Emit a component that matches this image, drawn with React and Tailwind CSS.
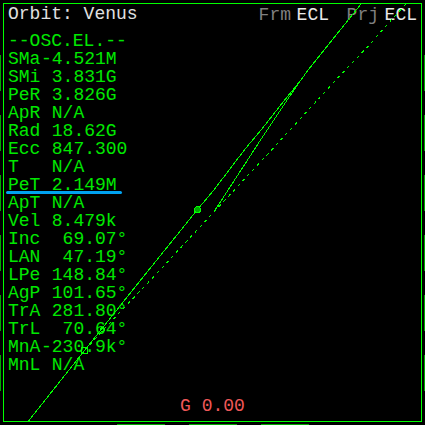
import React from "react";

const elements = [
  ["SMa", "-4.521M"],
  ["SMi", " 3.831G"],
  ["PeR", " 3.826G"],
  ["ApR", " N/A"],
  ["Rad", " 18.62G"],
  ["Ecc", " 847.300"],
  ["T", " N/A"],
  ["PeT", " 2.149M"],
  ["ApT", " N/A"],
  ["Vel", " 8.479k"],
  ["Inc", "  69.07°"],
  ["LAN", "  47.19°"],
  ["LPe", " 148.84°"],
  ["AgP", " 101.65°"],
  ["TrA", " 281.80°"],
  ["TrL", "  70.64°"],
  ["MnA", "-230.9k°"],
  ["MnL", " N/A"],
];

function SideRail({ right }) {
  return (
    <div className={`flex w-[3px] shrink-0 flex-col gap-6 pt-[55px] ${right ? "items-end" : "items-start"}`}>
      {[0, 1, 2, 3, 4, 5].map((i) => (
        <div key={i} className="h-9 w-px shrink-0 bg-[#00a800]" />
      ))}
    </div>
  );
}

function OrbitPlot() {
  return (
    <svg
      className="pointer-events-none absolute inset-0 h-full w-full"
      viewBox="4 4 417 417"
      fill="none"
      stroke="#00ff00"
      strokeWidth="1"
      shapeRendering="crispEdges"
      aria-hidden="true"
    >
      <path d="M28.5 421 L84.5 350.5 L141.5 279 L197.5 209.5 L213.5 190.5 L245.5 148.5 L261.5 129.5 L283.5 101.5 L300.5 80.5 L308.5 69.5 L361 4" />
      <path d="M300.5 80.5 L286.5 101 L261.5 138.5 L213.5 212.5" />
      <path
        d="M406 4 L388.5 23 L367.5 47 L340.5 75 L283.5 137 L213.5 212.5 L152.5 278 L113.5 319 L84.5 350.5"
        strokeDasharray="3 4"
      />
      <circle cx="197.5" cy="209.5" r="3" fill="#00a800" />
      <circle cx="102.5" cy="329.5" r="2" />
      <rect x="81.5" y="347.5" width="6" height="6" />
    </svg>
  );
}

export default function App() {
  return (
    <div className="flex h-screen min-h-[425px] w-full flex-col bg-black font-['Liberation_Mono',monospace] text-[18px] leading-[18px] text-[#00e800]">
      <div className="flex min-h-0 flex-1">
        <SideRail />
        <main className="relative mt-[3px] flex flex-1 flex-col border border-[#00ff00] pl-1">
          <header className="flex items-start justify-between pt-px pr-1">
            <h1 className="text-[#e0e0e0]">Orbit: Venus</h1>
            <dl className="flex pt-px">
              <div className="flex w-[88px] gap-1">
                <dt className="w-[34px] text-[#808080]">Frm</dt>
                <dd className="text-[#e8e8e8]">ECL</dd>
              </div>
              <div className="flex gap-1">
                <dt className="w-[34px] text-[#808080]">Prj</dt>
                <dd className="text-[#e8e8e8]">ECL</dd>
              </div>
            </dl>
          </header>
          <table className="mt-2 w-[124px] table-fixed border-collapse text-left">
            <caption className="text-left whitespace-nowrap">--OSC.EL.--</caption>
            <colgroup>
              <col className="w-[33px]" />
              <col />
            </colgroup>
            <tbody>
              {elements.map(([name, value]) => (
                <tr key={name} className="h-[18px]">
                  <th scope="row" className="p-0 font-normal">{name}</th>
                  <td className="p-0 whitespace-pre">{value}</td>
                </tr>
              ))}
            </tbody>
          </table>
          <p className="mt-auto mr-1 mb-1.5 text-center text-[#f05858]">G 0.00</p>
          <OrbitPlot />
          <div className="absolute top-[187px] left-[2px] h-[3px] w-[116px] rounded-full bg-[#00a2f0]" />
        </main>
        <SideRail right />
      </div>
      <div className="flex h-[3px] items-end justify-center gap-6">
        <div className="h-px w-12 bg-[#00a800]" />
        <div className="h-px w-12 bg-[#00a800]" />
        <div className="h-px w-12 bg-[#00a800]" />
      </div>
    </div>
  );
}
